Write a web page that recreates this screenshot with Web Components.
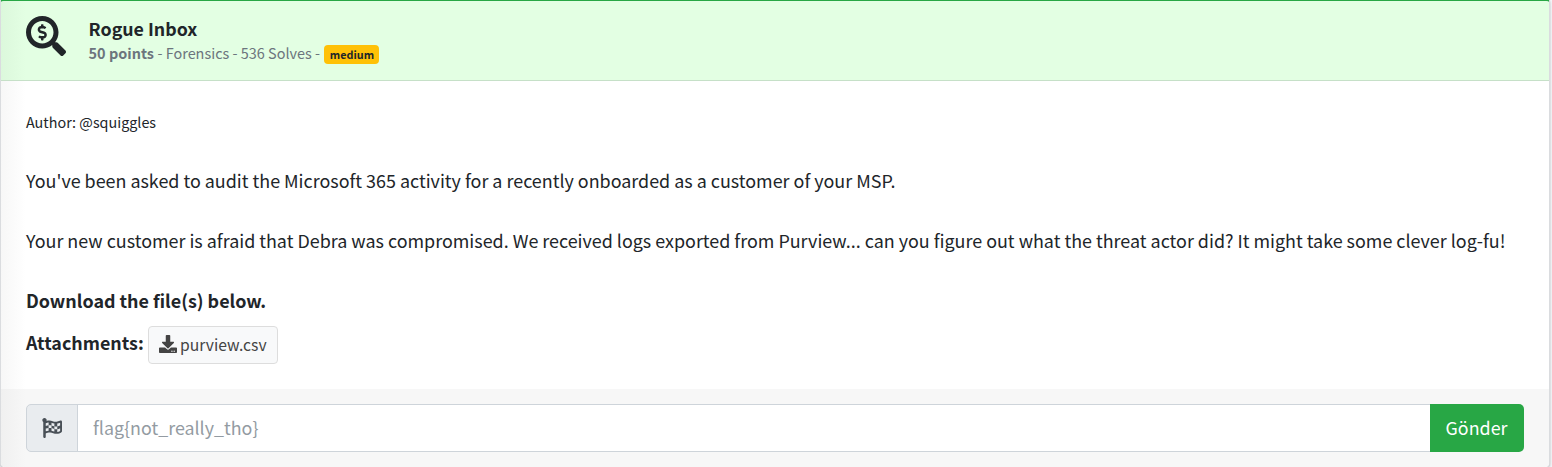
<!DOCTYPE html>
<html lang="en"><head><meta charset="utf-8"><title>Rogue Inbox</title>
<style>html,body{margin:0;height:100%;overflow:hidden}body{background:#f4f6f9;font-family:"Noto Sans CJK SC","Source Sans Pro",sans-serif;color:#212529}</style></head>
<body>
<challenge-card>
  <challenge-header slot="header" name="Rogue Inbox" points="50 points" level="medium">- Forensics - 536 Solves -</challenge-header>
  <challenge-body slot="body" author="Author: @squiggles">
    <challenge-line>You've been asked to audit the Microsoft 365 activity for a recently onboarded as a customer of your MSP.</challenge-line>
    <challenge-line>Your new customer is afraid that Debra was compromised. We received logs exported from Purview... can you figure out what the threat actor did? It might take some clever log-fu!</challenge-line>
    <challenge-line strong>Download the file(s) below.</challenge-line>
    <file-attachment slot="files">purview.csv</file-attachment>
  </challenge-body>
  <flag-form slot="footer">Gönder</flag-form>
</challenge-card>
<script>
const define = (name, html) => {
  const t = document.createElement('template');
  t.innerHTML = html;
  customElements.define(name, class extends HTMLElement {
    constructor() {
      super();
      this.attachShadow({mode: 'open'}).append(t.content.cloneNode(true));
      this.shadowRoot.querySelectorAll('[data-attr]').forEach(e => e.textContent = this.getAttribute(e.dataset.attr));
    }
  });
};
define('challenge-card', `<style>
:host{display:block;box-sizing:border-box;width:1550px;height:470px;margin-top:-2px;border:1px solid #dadcdf;border-top:3px solid #28a745;border-radius:5px;background:#fff;box-shadow:0 0 1px rgba(0,0,0,.125),0 1px 3px rgba(0,0,0,.2);overflow:hidden}
</style><slot name="header"></slot><slot name="body"></slot><slot name="footer"></slot>`);
define('challenge-header', `<style>
:host{display:flex;box-sizing:border-box;height:80px;padding:15px 25px;gap:22.6px;background:linear-gradient(90deg,#dcf8dc,#e3ffe3 25px);border-bottom:1px solid #c6e0c8}
svg{width:40px;height:40px;flex:none;fill:#212529}
.title{font-size:17.8px;font-weight:700;line-height:22px;margin-top:1px;height:24px}
.sub{display:flex;align-items:center;gap:3.5px;font-size:14.45px;line-height:24px;color:#6c757d;height:24px;white-space:nowrap}
.badge{box-sizing:border-box;width:55px;text-align:center;font-size:10.8px;font-weight:700;line-height:19px;height:19px;margin:2px 0 0 1px;border-radius:4px;background:#ffc107;color:#212529}
</style><svg viewBox="0 0 512 512"><path d="M505.04 442.66l-99.71-99.69c-4.5-4.5-10.6-7-17-7h-16.3c27.6-35.3 44-79.69 44-127.99C416.03 93.09 322.92 0 208.02 0S0 93.09 0 207.98s93.11 207.98 208.02 207.98c48.3 0 92.71-16.4 128.01-44v16.3c0 6.4 2.5 12.5 7 17l99.71 99.69c9.4 9.4 24.6 9.4 33.9 0l28.3-28.3c9.4-9.4 9.4-24.59.1-33.99zm-297.02-90.7c-79.54 0-144-64.34-144-143.98 0-79.53 64.35-143.98 144-143.98 79.54 0 144 64.34 144 143.98 0 79.53-64.35 143.98-144 143.98zm27.11-152.54l-45.01-13.5c-5.16-1.55-8.77-6.78-8.77-12.73 0-7.27 5.3-13.19 11.8-13.19h28.1c4.56 0 8.96 1.29 12.82 3.72 3.24 2.03 7.36 1.91 10.13-.73l11.75-11.21c3.53-3.37 3.33-9.21-.57-12.14-9.1-6.83-20.08-10.77-31.37-11.35V112c0-4.42-3.58-8-8-8h-16c-4.42 0-8 3.58-8 8v16.12c-23.63.63-42.68 20.55-42.68 45.07 0 19.97 12.99 37.81 31.58 43.39l45.01 13.5c5.16 1.55 8.77 6.78 8.77 12.73 0 7.27-5.3 13.19-11.8 13.19h-28.1c-4.56 0-8.96-1.29-12.82-3.72-3.24-2.03-7.36-1.91-10.13.73l-11.75 11.21c-3.53 3.37-3.33 9.21.57 12.14 9.1 6.83 20.08 10.77 31.37 11.35V304c0 4.42 3.58 8 8 8h16c4.42 0 8-3.58 8-8v-16.12c23.63-.63 42.68-20.54 42.68-45.07 0-19.97-12.99-37.81-31.59-43.39z"/></svg>
<div><div class="title" data-attr="name"></div><div class="sub"><b data-attr="points"></b><span><slot></slot></span><span class="badge" data-attr="level"></span></div></div>`);
define('challenge-body', `<style>
:host{display:block;box-sizing:border-box;height:308px;padding:29px 25px 0;background:linear-gradient(90deg,#f7f7f7,#fff 25px)}
.author{font-size:14.35px;line-height:24px;height:24px;margin-bottom:31px}
.files{display:flex;align-items:flex-start;gap:4px;margin-top:-19px}
b{font-size:17.87px;line-height:32px;width:118px;white-space:nowrap}
</style><div class="author"><span data-attr="author"></span></div><slot></slot><div class="files"><b>Attachments:</b><slot name="files"></slot></div>`);
define('challenge-line', `<style>
:host{display:block;font-size:17.91px;line-height:30px;height:30px;margin-bottom:30px;white-space:nowrap}
:host([strong]){font-weight:700}
</style><span><slot></slot></span>`);
define('file-attachment', `<style>
:host{display:flex;align-items:center;box-sizing:border-box;width:130px;height:38px;padding:0 10px;gap:3px;border:1px solid #ddd;border-radius:4px;background:#f8f9fa;color:#444;font-size:15.7px;line-height:36px}
svg{width:18px;height:18px;flex:none;fill:#444;margin-top:-2px}
</style><svg viewBox="0 0 512 512"><path d="M216 0h80c13.3 0 24 10.7 24 24v168h87.7c17.8 0 26.7 21.5 14.1 34.1L269.7 378.3c-7.5 7.5-19.8 7.5-27.3 0L90.1 226.1c-12.6-12.6-3.7-34.1 14.1-34.1H192V24c0-13.3 10.7-24 24-24zm296 376v112c0 13.3-10.7 24-24 24H24c-13.3 0-24-10.7-24-24V376c0-13.3 10.7-24 24-24h146.7l49 49c20.1 20.1 52.5 20.1 72.6 0l49-49H488c13.3 0 24 10.7 24 24zm-124 88c0-11-9-20-20-20s-20 9-20 20 9 20 20 20 20-9 20-20zm64 0c0-11-9-20-20-20s-20 9-20 20 9 20 20 20 20-9 20-20z"/></svg><span><slot></slot></span>`);
define('flag-form', `<style>
:host{display:flex;box-sizing:border-box;height:80px;padding:15px 25px 17px;background:linear-gradient(90deg,#f0f0f0,#f7f7f7 25px)}
.icon{box-sizing:border-box;width:52px;height:48px;flex:none;display:grid;place-items:center;border:1px solid #ced4da;border-radius:5px 0 0 5px;background:#e9ecef}
svg{width:20px;height:20px;fill:#495057}
input{box-sizing:border-box;flex:1;min-width:0;height:48px;margin:0 0 0 -1px;padding:0 15px 2px;border:1px solid #ced4da;border-right:0;border-radius:0;background:#fff;font:17.87px "Noto Sans CJK SC",sans-serif;outline:0}
input::placeholder{color:#939ba2;opacity:1}
button{box-sizing:border-box;width:94px;height:48px;padding:0 1px 2px 0;border:0;border-radius:0 5px 5px 0;background:#28a745;color:#fff;font:17.87px/46px "Noto Sans CJK SC",sans-serif}
</style><div class="icon"><svg viewBox="0 0 512 512"><path d="M243.2 189.9V258c26.1 5.9 49.3 15.6 73.6 22.3v-68.2c-26-5.8-49.4-15.5-73.6-22.2zm223.3-123c-34.3 15.9-76.5 31.9-117 31.9C296 98.8 251.7 64 184.3 64c-25 0-47.3 4.4-68 12 2.8-7.3 4.1-15.2 3.6-23.6C118.1 24 94.8 1.2 66.3 0 34.3-1.3 8 24.3 8 56c0 19 9.5 35.8 24 45.9V488c0 13.3 10.7 24 24 24h16c13.3 0 24-10.7 24-24v-94.4c28.3-12.1 63.6-22.1 114.4-22.1 53.6 0 97.8 34.8 165.2 34.8 48.2 0 86.7-16.3 122.5-40.9 8.7-6 13.8-15.8 13.8-26.4V95.9c.1-23.3-24.2-38.8-45.4-29zM169.6 325.5c-25.8 2.7-50 8.2-73.6 16.6v-70.5c26.2-9.3 47.5-15 73.6-17.4v71.3zM464 191c-23.6 9.8-46.3 19.5-73.6 23.9V286c24.8-3.4 51.4-11.8 73.6-26v70.5c-25.1 16.1-48.5 24.7-73.6 27.1V286c-27 3.7-47.9 1.5-73.6-5.6v67.4c-23.9-7.4-47.3-16.7-73.6-21.3V258c-19.7-4.4-40.8-6.8-73.6-3.8v-70c-22.4 3.1-44.6 10.2-73.6 20.9v-70.5c33.2-12.2 50.1-19.8 73.6-22v71.6c27-3.7 48.4-1.3 73.6 5.7v-67.4c23.7 7.4 47.2 16.7 73.6 21.3v68.4c23.7 5.3 47.6 6.9 73.6 2.7V143c27-4.8 52.3-13.6 73.6-22.5z"/></svg></div><input placeholder="flag{not_really_tho}"><button><slot></slot></button>`);
</script></body></html>
